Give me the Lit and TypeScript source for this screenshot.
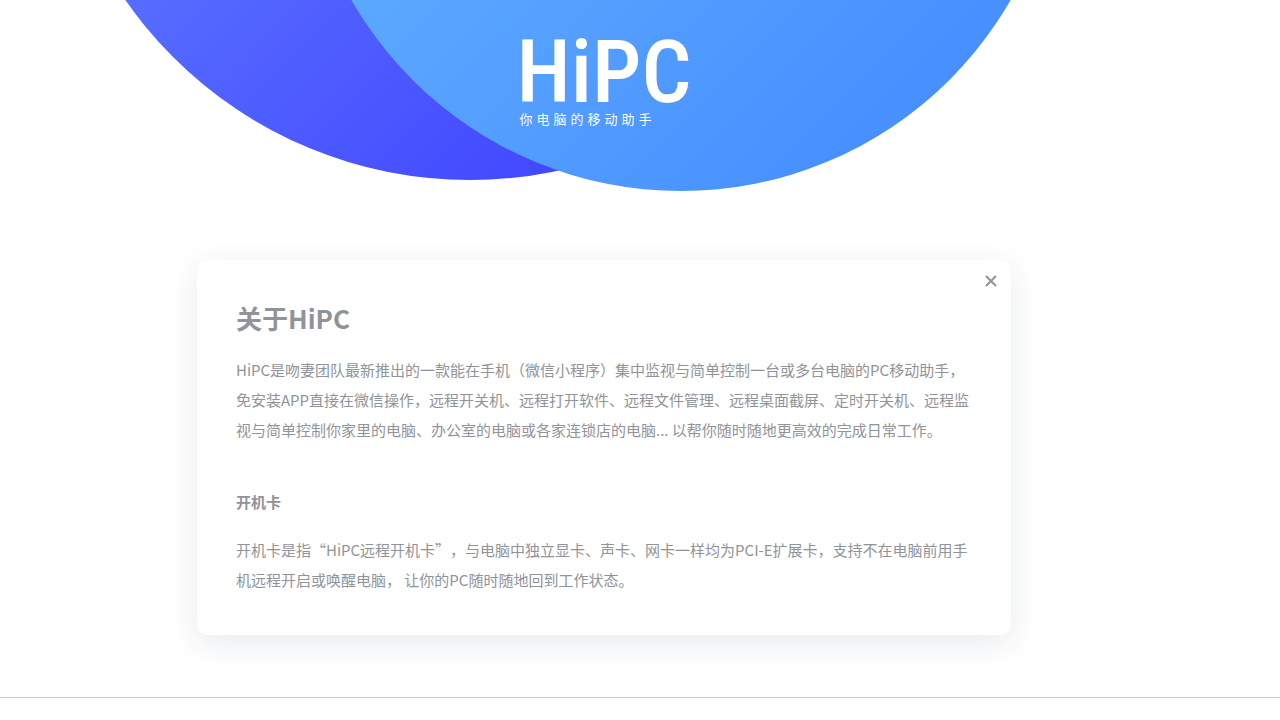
import { LitElement, html, css } from "lit";
import { customElement, state } from "lit/decorators.js";

@customElement("app-root")
export class AppRoot extends LitElement {
  @state() private open = true;

  static styles = css`
    :host {
      display: block;
      min-height: 100vh;
      overflow: hidden;
      background: #fff;
      color: #909399;
      font: 15px/30px "Noto Sans CJK SC", sans-serif;
      text-spacing-trim: space-all;
    }
    * {
      box-sizing: border-box;
    }
    .page {
      display: flex;
      flex-direction: column;
      align-items: center;
      padding-right: 72px;
    }
    .hero {
      position: relative;
      width: 100%;
      height: 260px;
      display: flex;
      flex-direction: column;
      align-items: center;
      padding-top: 34px;
    }
    .disc {
      position: absolute;
      border-radius: 50%;
    }
    .disc-back {
      width: 840px;
      height: 840px;
      bottom: 80px;
      left: calc(50% - 554px);
      background: linear-gradient(135deg, #6f98ff, #3734ff);
    }
    .disc-front {
      width: 760px;
      height: 760px;
      bottom: 69px;
      left: calc(50% - 303px);
      background: linear-gradient(135deg, #6dc0ff, #4186ff);
    }
    .brand {
      position: relative;
      color: #fff;
    }
    .name {
      margin: 0;
      font: 500 88px/76px "Roboto Condensed", "DejaVu Sans Condensed", sans-serif;
    }
    .tagline {
      padding-left: 3px;
      font-size: 13px;
      line-height: 18px;
      letter-spacing: 4px;
    }
    .card {
      position: relative;
      width: 100%;
      max-width: 814px;
      min-height: 375px;
      padding: 39px;
      border-radius: 10px;
      background: #fff;
      box-shadow: 0 8px 30px rgba(28, 50, 79, 0.1);
    }
    .close {
      position: absolute;
      top: 11px;
      right: 10px;
      width: 20px;
      height: 20px;
      padding: 4px;
      border: 0;
      background: none;
      color: inherit;
      cursor: pointer;
    }
    .close svg {
      display: block;
      width: 12px;
      height: 12px;
    }
    h2 {
      margin: 0 0 18px;
      font-size: 26px;
      line-height: 38px;
    }
    h3 {
      margin: 42px 0 18px;
      font-size: 15px;
      line-height: 30px;
    }
    p {
      margin: 0;
    }
    .rule {
      margin: 62px 0 0;
      border: 0;
      border-top: 1px solid #c8c8cc;
    }
  `;

  render() {
    return html`
      <div class="page">
        <header class="hero">
          <div class="disc disc-back"></div>
          <div class="disc disc-front"></div>
          <div class="brand">
            <h1 class="name">HiPC</h1>
            <p class="tagline">你电脑的移动助手</p>
          </div>
        </header>
        ${this.open
          ? html`<main class="card">
              <button class="close" aria-label="关闭" @click=${() => (this.open = false)}>
                <svg viewBox="0 0 12 12" fill="none" stroke="currentColor" stroke-width="2">
                  <path d="M1 1 11 11M11 1 1 11" />
                </svg>
              </button>
              <h2>关于HiPC</h2>
              <p>HiPC是吻妻团队最新推出的一款能在手机（微信小程序）集中监视与简单控制一台或多台电脑的PC移动助手，免安装APP直接在微信操作，远程开关机、远程打开软件、远程文件管理、远程桌面截屏、定时开关机、远程监视与简单控制你家里的电脑、办公室的电脑或各家连锁店的电脑... 以帮你随时随地更高效的完成日常工作。</p>
              <h3>开机卡</h3>
              <p>开机卡是指“HiPC远程开机卡”，与电脑中独立显卡、声卡、网卡一样均为PCI-E扩展卡，支持不在电脑前用手机远程开启或唤醒电脑， 让你的PC随时随地回到工作状态。</p>
            </main>`
          : null}
      </div>
      <hr class="rule" />
    `;
  }
}
